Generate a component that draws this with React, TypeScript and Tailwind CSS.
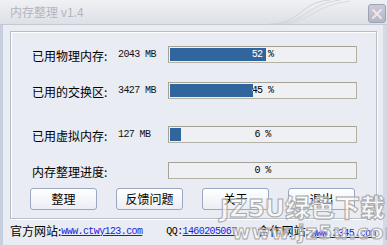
import { ReactNode } from 'react'

const cjk = "font-['SimSun','Noto_Sans_CJK_SC',sans-serif]"
const mono = "font-['Liberation_Mono','Noto_Sans_CJK_SC',monospace]"

interface RowProps {
  label: string
  value?: string
  pct: number
}

function Bar({ pct }: { pct: number }) {
  return (
    <div className="w-[189px] h-[17px] border border-[#b3b0a4] border-t-[#a5a297] border-l-[#a5a297] p-px bg-[#eef0f4]">
      <div className="relative w-full h-full">
        <div className={`absolute inset-0 flex items-center justify-center text-[10px] tracking-[-0.6px] text-black ${mono}`}>
          {pct} %
        </div>
        <div className="absolute left-0 top-0 bottom-0 overflow-hidden bg-[#30669d]" style={{ width: `${pct}%` }}>
          <div className={`w-[185px] h-full flex items-center justify-center text-[10px] tracking-[-0.6px] text-white ${mono}`}>
            {pct} %
          </div>
        </div>
      </div>
    </div>
  )
}

function Row({ label, value, pct }: RowProps) {
  return (
    <div className="flex items-center h-[17px]">
      <div className={`w-[86px] text-[12px] leading-none text-black translate-y-[1px] ${cjk}`}>{label}</div>
      <div className={`w-[50px] text-[10px] tracking-[-0.6px] text-[#111] ${mono}`}>{value}</div>
      <Bar pct={pct} />
    </div>
  )
}

function Btn({ children }: { children: ReactNode }) {
  return (
    <button className={`w-[67px] h-[22px] rounded-[3px] border border-[#9da6c2] bg-gradient-to-b from-[#ffffff] to-[#eceef4] text-[12px] text-black ${cjk}`}>
      {children}
    </button>
  )
}

function Link({ children }: { children: ReactNode }) {
  return <span className={`text-[10px] tracking-[-0.6px] text-[#1a1ae6] underline ${mono}`}>{children}</span>
}

export default function App() {
  return (
    <div className="relative w-[387px] h-[245px] overflow-hidden bg-[#e9ecf2] flex flex-col">
      {/* title bar */}
      <div className="relative h-[25px] shrink-0 flex items-center pl-[10px] bg-gradient-to-b from-[#eff1f4] to-[#dde0e6] border-b border-[#c3c8d1]">
        <span className={`text-[12px] text-[#b2b6be] ${cjk}`}>内存整理 v1.4</span>
        <svg className="absolute left-[270px] top-0" width="90" height="25" viewBox="0 0 90 25" fill="none">
          <path d="M0 24 C30 24 30 2 60 0" stroke="#cfd2d8" strokeWidth="1" />
          <path d="M8 24 C36 22 38 4 70 0" stroke="#d3d6dc" strokeWidth="1" />
          <path d="M16 24 C42 20 44 6 80 1" stroke="#d6d9df" strokeWidth="1" />
        </svg>
        <div className="absolute right-[1px] top-[4px] w-[18px] h-[19px] rounded-[3px] border border-[#9ea2b4] bg-gradient-to-b from-[#c9cbd8] to-[#b3b6c6] flex items-center justify-center">
          <svg width="12" height="12" viewBox="0 0 12 12">
            <path d="M2 2 L10 10 M10 2 L2 10" stroke="#f3e4ea" strokeWidth="2" strokeLinecap="round" />
          </svg>
        </div>
      </div>

      {/* body */}
      <div className="flex-1 flex flex-col border-l-[3px] border-l-[#c7cfdf] border-r-[4px] border-r-[#d4d9e4]">
        <div className="mt-[6px] ml-[7px] mr-[6px] h-[188px] border border-[#b9bdc6] shadow-[inset_1px_1px_0_#ffffff,1px_1px_0_#ffffff] pl-[21px] pt-[14px]">
          <Row label="已用物理内存:" value="2043 MB" pct={52} />
          <div className="mt-[19px]">
            <Row label="已用的交换区:" value="3427 MB" pct={45} />
          </div>
          <div className="mt-[27px]">
            <Row label="已用虚拟内存:" value="127 MB" pct={6} />
          </div>
          <div className="mt-[19px]">
            <Row label="内存整理进度:" pct={0} />
          </div>
          <div className="mt-[9px] -ml-[2px] flex gap-[19px]">
            <Btn>整理</Btn>
            <Btn>反馈问题</Btn>
            <Btn>关于</Btn>
            <Btn>退出</Btn>
          </div>
        </div>

        {/* footer */}
        <div className={`flex items-center h-[24px] pl-[7px] text-[12px] text-black whitespace-nowrap ${cjk}`}>
          <span>官方网站:</span>
          <Link>www.ctwy123.com</Link>
          <span className="ml-[24px] text-[10px] tracking-[-0.6px] font-['Liberation_Mono',monospace]">QQ:</span>
          <Link>1460205067</Link>
          <span className="ml-[21px]">合作网站:</span>
          <span className="ml-[2px]"><Link>www.2345.com</Link></span>
        </div>
      </div>

      {/* watermark */}
      <div className="absolute left-[220px] top-[196px] pointer-events-none select-none whitespace-nowrap text-[25px] leading-none font-black text-white/55 [-webkit-text-stroke:1px_#a8a8a8] font-['DejaVu_Sans','Noto_Sans_CJK_SC',sans-serif]">
        JZ5U绿色下载
      </div>
      <div className="absolute left-[232px] top-[222px] pointer-events-none select-none whitespace-nowrap text-[20px] leading-none font-black text-white/55 [-webkit-text-stroke:1px_#a8a8a8] font-['DejaVu_Sans',sans-serif] tracking-[1px]">
        www.jz5u.com
      </div>
    </div>
  )
}
